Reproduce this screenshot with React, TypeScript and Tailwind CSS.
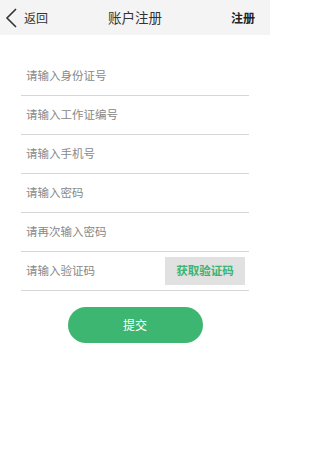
const fields = ["请输入身份证号", "请输入工作证编号", "请输入手机号", "请输入密码", "请再次输入密码"];

export default function App() {
  return (
    <div className="w-[270px] h-[461px] bg-white" style={{ fontFamily: '"Noto Sans CJK SC", "Noto Sans", sans-serif' }}>
      {/* header */}
      <div className="h-[35px] bg-[#f4f4f4] flex items-center justify-between relative">
        <div className="flex items-center pl-[5px]">
          <svg width="12" height="20" viewBox="0 0 12 20" fill="none">
            <path d="M11 1 L2 10 L11 19" stroke="#333" strokeWidth="1.6" />
          </svg>
          <span className="ml-[7px] text-[12px] text-[#333]">返回</span>
        </div>
        <span className="absolute left-0 right-0 text-center text-[13.5px] text-[#333] pointer-events-none">账户注册</span>
        <span className="pr-[15px] text-[12px] font-bold text-[#222]">注册</span>
      </div>

      {/* form */}
      <div className="mx-[21px] mt-[22px]">
        {fields.map((f) => (
          <div key={f} className="h-[39px] border-b border-[#d6d6d6] flex items-center pl-[5px]">
            <span className="text-[11.5px] text-[#888]">{f}</span>
          </div>
        ))}
        <div className="h-[39px] border-b border-[#d6d6d6] flex items-center justify-between pl-[5px] pr-[4px]">
          <span className="text-[11.5px] text-[#888]">请输入验证码</span>
          <button className="w-[80px] h-[28px] bg-[#e1e1e1] text-[11.5px] font-bold text-[#3cb371]">获取验证码</button>
        </div>
      </div>

      <div className="flex justify-center mt-[16px]">
        <button className="w-[135px] h-[36px] rounded-full bg-[#3db672] text-white text-[12px]">提交</button>
      </div>
    </div>
  );
}
